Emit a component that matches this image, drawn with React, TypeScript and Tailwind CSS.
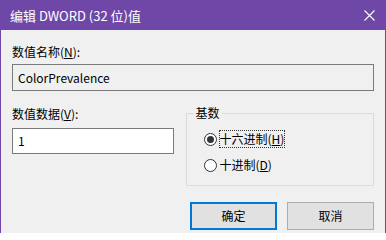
import React from "react";

const font = { fontFamily: '"Noto Sans CJK SC", "Noto Sans", sans-serif' };

function Radio({ checked }: { checked?: boolean }) {
  return (
    <span className="w-[13px] h-[13px] rounded-full border border-[#333333] bg-white flex items-center justify-center shrink-0">
      {checked && <span className="w-[7px] h-[7px] rounded-full bg-[#333333]" />}
    </span>
  );
}

export default function App() {
  return (
    <div
      className="w-[386px] h-[233px] bg-[#f0f0f0] border-x border-[#6f47a7] flex flex-col text-[12px] text-black overflow-hidden"
      style={font}
    >
      <div className="h-[30px] bg-[#6f47a7] flex items-center justify-between pl-[9px] pr-[10px] text-white shrink-0">
        <span className="leading-none text-[13px]">编辑 DWORD (32 位)值</span>
        <svg width="11" height="11" viewBox="0 0 11 11">
          <path d="M0.5 0.5 L10.5 10.5 M10.5 0.5 L0.5 10.5" stroke="white" strokeWidth="1.1" fill="none" />
        </svg>
      </div>
      <div className="flex flex-col px-[11px] pt-[14px]">
        <div className="h-[16px] leading-[16px]">
          数值名称(<span className="underline">N</span>):
        </div>
        <div className="mt-[4px] h-[27px] border border-[#7a7a7a] bg-[#f0f0f0] flex items-center pl-[5px]">
          ColorPrevalence
        </div>
        <div className="flex mt-[15px] gap-[12px]">
          <div className="w-[162px] flex flex-col">
            <div className="h-[16px] leading-[16px]">
              数值数据(<span className="underline">V</span>):
            </div>
            <div className="mt-[6px] h-[26px] border border-[#7a7a7a] bg-white flex items-center pl-[5px]">
              1
            </div>
          </div>
          <fieldset className="w-[189px] h-[81px] border border-[#dcdcdc] -mt-[1px]">
            <legend className="ml-[7px] px-[2px] h-[16px] leading-[16px]">基数</legend>
            <div className="flex flex-col pl-[17px] pt-[9px] gap-[8px]">
              <div className="flex items-center gap-[2px]">
                <Radio checked />
                <span className="border border-dotted border-[#333] h-[18px] leading-[16px]">
                  十六进制(<span className="underline">H</span>)
                </span>
              </div>
              <div className="flex items-center gap-[2px]">
                <Radio />
                <span className="border border-transparent h-[18px] leading-[16px]">
                  十进制(<span className="underline">D</span>)
                </span>
              </div>
            </div>
          </fieldset>
        </div>
        <div className="flex justify-end gap-[10px] mt-[16px]">
          <button className="w-[87px] h-[28px] bg-[#e1e1e1] border-2 border-[#0078d7] flex items-center justify-center">
            确定
          </button>
          <button className="w-[87px] h-[28px] bg-[#e1e1e1] border border-[#adadad] flex items-center justify-center">
            取消
          </button>
        </div>
      </div>
    </div>
  );
}
